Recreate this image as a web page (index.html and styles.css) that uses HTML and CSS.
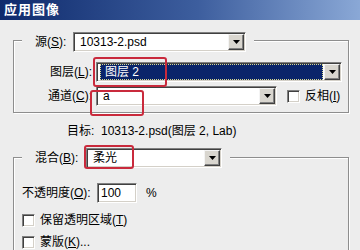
FILE: index.html
```html
<!DOCTYPE html>
<html lang="zh">
<head>
<meta charset="utf-8">
<title>应用图像</title>
<link rel="stylesheet" href="styles.css">
</head>
<body>
<div class="window">
  <div class="titlebar">应用图像</div>
  <div class="body">
    <div class="group g1">
      <div class="group-head">
        <span class="lbl lbl-src">源(<u>S</u>):</span>
        <div class="combo w-src">
          <span class="val">10313-2.psd</span>
          <span class="btn"><svg width="7" height="4" viewBox="0 0 7 4"><polygon points="0,0 7,0 3.5,4"/></svg></span>
        </div>
      </div>
      <div class="row r-layer">
        <span class="rlbl">图层(<u>L</u>):</span>
        <div class="combo w-layer">
          <span class="val sel">图层 2</span>
          <span class="btn"><svg width="7" height="4" viewBox="0 0 7 4"><polygon points="0,0 7,0 3.5,4"/></svg></span>
        </div>
      </div>
      <div class="row r-chan">
        <span class="rlbl">通道(<u>C</u>):</span>
        <div class="combo w-chan">
          <span class="val">a</span>
          <span class="btn"><svg width="7" height="4" viewBox="0 0 7 4"><polygon points="0,0 7,0 3.5,4"/></svg></span>
        </div>
        <span class="check check-inv"><span class="box"></span><span class="clbl">反相(<u>I</u>)</span></span>
      </div>
    </div>
    <div class="target">目标:&nbsp; 10313-2.psd(图层 2, Lab)</div>
    <div class="group g2">
      <div class="group-head">
        <span class="lbl lbl-blend">混合(<u>B</u>):</span>
        <div class="combo w-blend">
          <span class="val">柔光</span>
          <span class="btn"><svg width="7" height="4" viewBox="0 0 7 4"><polygon points="0,0 7,0 3.5,4"/></svg></span>
        </div>
      </div>
      <div class="row r-opacity">
        <span class="olbl">不透明度(<u>O</u>):</span>
        <span class="input">100</span>
        <span class="pct">%</span>
      </div>
      <div class="crow c1"><span class="box"></span><span class="clbl">保留透明区域(<u>T</u>)</span></div>
      <div class="crow c2"><span class="box"></span><span class="clbl">蒙版(<u>K</u>)...</span></div>
    </div>
  </div>
  <div class="mark m1"></div>
  <div class="mark m2"></div>
  <div class="mark m3"></div>
</div>
</body>
</html>
```
FILE: styles.css
```css
* { box-sizing: border-box; }
html, body { margin: 0; padding: 0; }
body {
  width: 360px;
  height: 250px;
  overflow: hidden;
  background: #ededed;
  font-family: "Liberation Sans", "Noto Sans CJK SC", sans-serif;
  font-size: 12px;
  line-height: 14px;
  color: #000;
}
u { text-decoration: underline; text-underline-offset: 1px; }
.window { position: relative; height: 250px; overflow: hidden; }
.titlebar {
  height: 20px;
  background: linear-gradient(90deg, #0e2a6c 0%, #3d5e9e 55%, #8aa8d6 100%);
  color: #fff;
  font-weight: bold;
  font-size: 13px;
  line-height: 20px;
  padding-left: 4px;
  letter-spacing: 1px;
}
.body { padding: 20px 11px 0 13px; }
.group {
  border: 1px solid #8e8e8e;
  box-shadow: inset 1px 1px 0 #fff, 1px 1px 0 #fff;
  display: flex;
  flex-direction: column;
  align-items: flex-start;
}
.g1 { padding-bottom: 6px; }
.g2 { margin-top: 19px; height: 94px; }
.group-head {
  display: flex;
  align-items: center;
  height: 20px;
  margin: -9px 0 0 8px;
  padding: 0 8px 0 13px;
  background: #ededed;
}
.g2 .group-head { margin-top: -10px; }
.lbl-src { width: 38px; }
.lbl-blend { width: 51px; }
.combo {
  display: flex;
  align-items: center;
  height: 20px;
  padding: 1px;
  background: #fff;
  border: 1px solid;
  border-color: #808080 #fff #fff #808080;
  box-shadow: inset 1px 1px 0 #404040, inset -1px -1px 0 #d4d0c8;
}
.w-src { width: 173px; }
.w-layer { width: 246px; }
.w-chan { width: 181px; }
.w-blend { width: 136px; }
.val {
  flex: 1;
  height: 16px;
  line-height: 16px;
  padding-left: 5px;
  white-space: nowrap;
}
.sel {
  margin: 0 1px 0 2px;
  padding-left: 4px;
  line-height: 14px;
  background: #0a246a;
  color: #fff;
  border: 1px dotted #d8d890;
}
.btn {
  width: 16px;
  height: 16px;
  display: flex;
  align-items: center;
  justify-content: center;
  background: #d9d6cf;
  border: 1px solid;
  border-color: #f4f4f4 #404040 #404040 #f4f4f4;
  box-shadow: inset -1px -1px 0 #808080;
}
.btn svg { display: block; fill: #000; }
.row { display: flex; align-items: center; height: 20px; }
.r-layer { margin-top: 10px; }
.r-chan { margin-top: 4px; }
.rlbl { width: 82px; padding-right: 4px; text-align: right; white-space: nowrap; }
.check { display: flex; align-items: center; margin-left: 10px; }
.box {
  width: 13px;
  height: 13px;
  background: #fff;
  border: 1px solid;
  border-color: #808080 #fff #fff #808080;
  box-shadow: inset 1px 1px 0 #404040, inset -1px -1px 0 #d4d0c8;
  flex: none;
}
.clbl { margin-left: 5px; white-space: nowrap; }
.target { margin-top: 11px; padding-left: 54px; white-space: nowrap; }
.r-opacity { margin: 15px 0 0 8px; }
.olbl { width: 75px; white-space: nowrap; }
.input {
  width: 40px;
  height: 20px;
  line-height: 16px;
  padding: 1px 0 0 3px;
  background: #fff;
  border: 1px solid;
  border-color: #808080 #fff #fff #808080;
  box-shadow: inset 1px 1px 0 #404040, inset -1px -1px 0 #d4d0c8;
}
.pct { margin-left: 9px; }
.crow { display: flex; align-items: center; height: 16px; margin-left: 8px; }
.c1 { margin-top: 9px; }
.c2 { margin-top: 6px; }
.mark {
  position: absolute;
  border: 2px solid #c92a3c;
  border-radius: 3px;
}
.m1 { left: 93px; top: 57px; width: 74px; height: 30px; }
.m2 { left: 90px; top: 90px; width: 54px; height: 26px; }
.m3 { left: 84px; top: 145px; width: 50px; height: 24px; }
```
